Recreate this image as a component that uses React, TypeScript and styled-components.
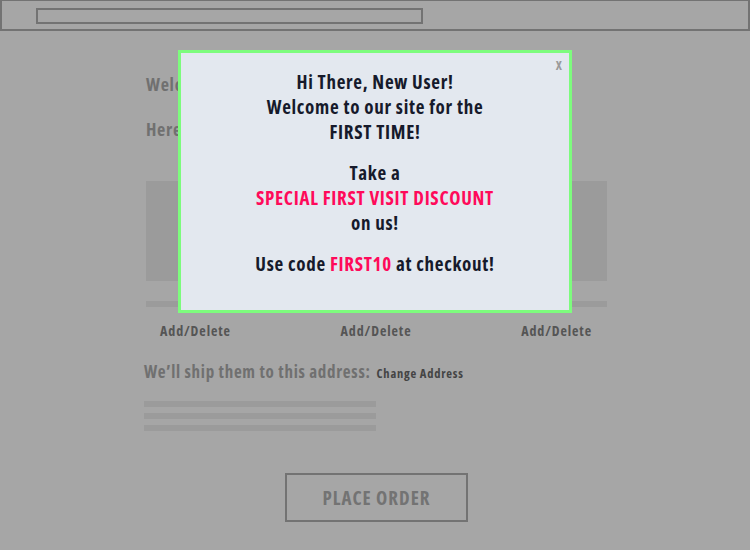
import styled, { createGlobalStyle } from "styled-components";

const GlobalStyle = createGlobalStyle`
  html, body {
    margin: 0;
    padding: 0;
    background: #a6a6a6;
  }
  body {
    font-family: "Open Sans", "Noto Sans", "DejaVu Sans", sans-serif;
    font-stretch: condensed;
    font-weight: 700;
  }
`;

export default function App() {
  return (
    <>
      <GlobalStyle />
      <Page>
        <Header>
          <SearchBox />
        </Header>
        <Content>
          <Heading>Welcome back to checkout</Heading>
          <Heading>Here are the items in your cart</Heading>
          <ItemImages />
          <ItemBar />
          <ItemRow>
            <ItemAction>Add/Delete</ItemAction>
            <ItemAction>Add/Delete</ItemAction>
            <ItemAction>Add/Delete</ItemAction>
          </ItemRow>
          <ShipRow>
            <ShipLabel>We’ll ship them to this address:</ShipLabel>
            <ChangeLink>Change Address</ChangeLink>
          </ShipRow>
          <AddressLines>
            <AddressLine />
            <AddressLine />
            <AddressLine />
          </AddressLines>
          <OrderButton>PLACE ORDER</OrderButton>
        </Content>
        <Modal>
          <CloseX>X</CloseX>
          <ModalText>
            Hi There, New User!
            <br />
            Welcome to our site for the
            <br />
            FIRST TIME!
          </ModalText>
          <ModalText>
            Take a
            <br />
            <Pink>SPECIAL FIRST VISIT DISCOUNT</Pink>
            <br />
            on us!
          </ModalText>
          <ModalText>
            Use code <Pink>FIRST10</Pink> at checkout!
          </ModalText>
        </Modal>
      </Page>
    </>
  );
}

const Page = styled.div`
  position: relative;
  width: 750px;
  height: 550px;
  overflow: hidden;
`;

const Header = styled.div`
  height: 27px;
  border: 2px solid #737373;
  border-top-width: 1px;
  display: flex;
  align-items: center;
  padding-left: 34px;
  padding-top: 1px;
`;

const SearchBox = styled.div`
  width: 383px;
  height: 12px;
  border: 2px solid #737373;
`;

const Content = styled.div`
  padding: 40px 143px 0 146px;
  display: flex;
  flex-direction: column;
`;

const Heading = styled.div`
  font-size: 18px;
  line-height: 26px;
  letter-spacing: 0.7px;
  color: #707070;
  margin-bottom: 19px;
`;

const ItemImages = styled.div`
  height: 100px;
  margin-top: 20px;
  background: #9b9b9b;
`;

const ItemBar = styled.div`
  height: 6px;
  margin-top: 20px;
  background: #9b9b9b;
`;

const ItemRow = styled.div`
  display: flex;
  justify-content: space-between;
  padding: 0 15px 0 14px;
  margin-top: 14px;
  line-height: 20px;
`;

const ItemAction = styled.div`
  font-size: 14px;
  letter-spacing: 0.9px;
  color: #555;
`;

const ShipRow = styled.div`
  display: flex;
  align-items: baseline;
  gap: 6px;
  margin-top: 20px;
  margin-left: -2px;
  line-height: 22px;
`;

const ShipLabel = styled.span`
  font-size: 17px;
  letter-spacing: 0.7px;
  color: #707070;
`;

const ChangeLink = styled.span`
  font-size: 12.5px;
  letter-spacing: 0.75px;
  color: #444;
`;

const AddressLines = styled.div`
  display: flex;
  flex-direction: column;
  gap: 6px;
  width: 232px;
  margin-left: -2px;
  margin-top: 16px;
`;

const AddressLine = styled.div`
  height: 6px;
  background: #9b9b9b;
`;

const OrderButton = styled.div`
  align-self: center;
  box-sizing: border-box;
  width: 183px;
  height: 49px;
  margin-top: 42px;
  border: 2px solid #737373;
  display: flex;
  align-items: center;
  justify-content: center;
  font-size: 19px;
  letter-spacing: 1px;
  color: #737373;
`;

const Modal = styled.div`
  position: absolute;
  left: 178px;
  top: 50px;
  width: 394px;
  height: 263px;
  box-sizing: border-box;
  border: 3px solid #7dfc7d;
  background: #e3e8ef;
  display: flex;
  flex-direction: column;
  align-items: center;
  padding-top: 17px;
  gap: 16px;
`;

const CloseX = styled.div`
  position: absolute;
  top: 3px;
  right: 7px;
  font-size: 13px;
  color: #9a9a9a;
`;

const ModalText = styled.div`
  font-size: 19px;
  line-height: 25px;
  letter-spacing: 0.7px;
  color: #161a2b;
  text-align: center;
`;

const Pink = styled.span`
  color: #ff0a5a;
`;
